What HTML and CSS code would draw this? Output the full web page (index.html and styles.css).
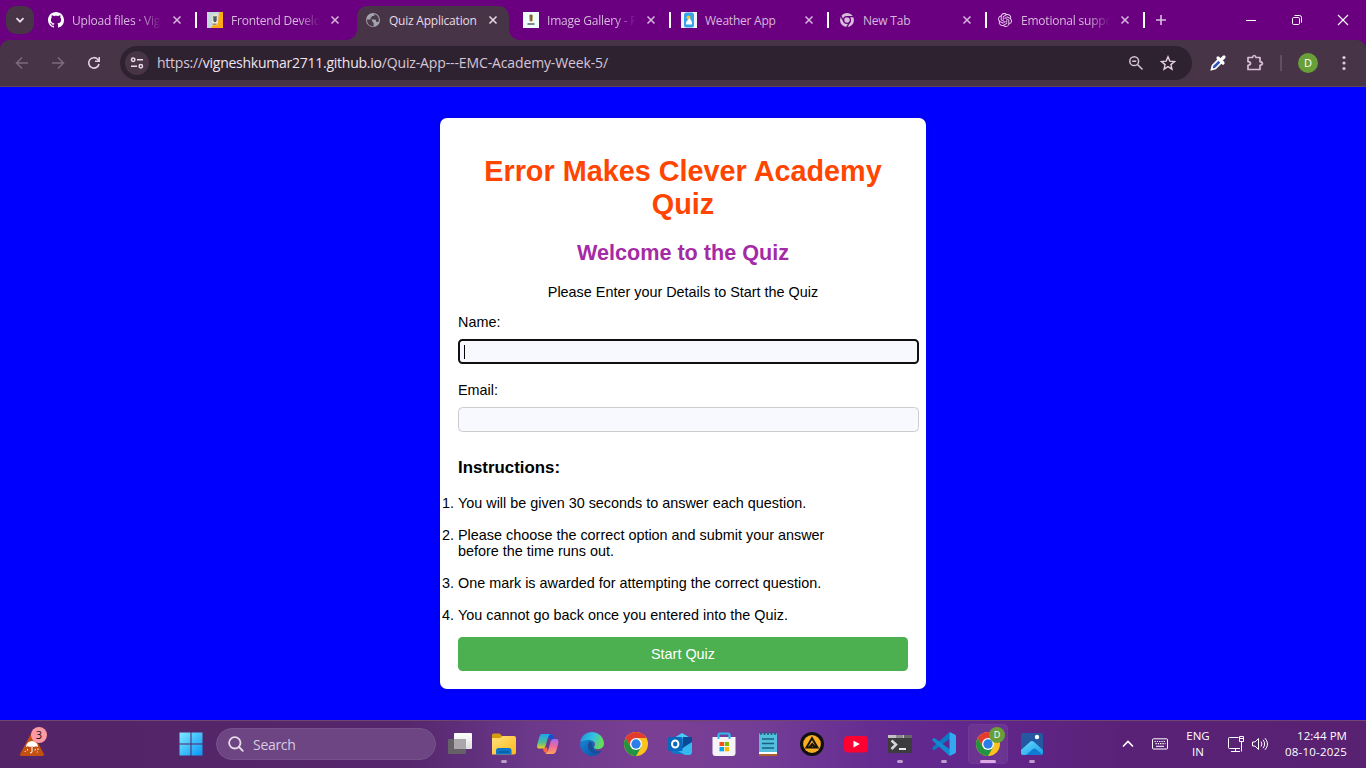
FILE: index.html
```html
<!DOCTYPE html>
<html lang="en">
<head>
<meta charset="utf-8">
<title>Quiz Application</title>
<link rel="stylesheet" href="styles.css">
</head>
<body>
<svg class="defs" width="0" height="0">
  <defs>
    <symbol id="x" viewBox="0 0 16 16"><path d="M4.500 4.500l7 7M11.500 4.500l-7 7" stroke="currentColor" stroke-width="1.5" fill="none"/></symbol>
    <symbol id="chrome" viewBox="0 0 24 24">
      <circle cx="12" cy="12" r="12" fill="#fcc31e"/>
      <path d="M1.61 6 6.8 15 12 6h10.39A12 12 0 0 0 1.61 6Z" fill="#e33b2e"/>
      <path d="M1.61 6A12 12 0 0 0 12 24l5.2-9H6.8Z" fill="#229342"/>
      <circle cx="12" cy="12" r="6" fill="#fff"/><circle cx="12" cy="12" r="4.7" fill="#2b7de9"/>
    </symbol>
  </defs>
</svg>
<div class="screen">
  <header class="tabstrip">
    <button class="tab-search"><svg width="12" height="12" viewBox="0 0 12 12"><path d="M2.5 4.2 6 7.7l3.5-3.5" stroke="#eadbe9" stroke-width="1.8" fill="none"/></svg></button>
    <nav class="tabs">
      <div class="tab sep first">
        <svg class="fav" viewBox="0 0 16 16"><path fill="#fff" d="M8 0C3.58 0 0 3.58 0 8c0 3.54 2.29 6.53 5.47 7.59.4.07.55-.17.55-.38 0-.19-.01-.82-.01-1.49-2.01.37-2.53-.49-2.69-.94-.09-.23-.48-.94-.82-1.13-.28-.15-.68-.52-.01-.53.63-.01 1.08.58 1.23.82.72 1.21 1.87.87 2.33.66.07-.52.28-.87.51-1.07-1.78-.2-3.64-.89-3.64-3.95 0-.87.31-1.59.82-2.15-.08-.2-.36-1.02.08-2.12 0 0 .67-.21 2.2.82.64-.18 1.32-.27 2-.27s1.36.09 2 .27c1.53-1.04 2.2-.82 2.2-.82.44 1.1.16 1.92.08 2.12.51.56.82 1.27.82 2.15 0 3.07-1.87 3.75-3.65 3.95.29.25.54.73.54 1.48 0 1.07-.01 1.93-.01 2.2 0 .21.15.46.55.38A8.01 8.01 0 0 0 16 8c0-4.42-3.58-8-8-8z"/></svg>
        <span class="title fade">Upload files · Vig</span><svg class="close"><use href="#x"/></svg>
      </div>
      <div class="tab">
        <svg class="fav" viewBox="0 0 16 16"><path fill="#c4d9dc" d="M0 0h16v16H0z"/><path fill="#ffa915" d="M12 0h4v16H4l2-4 5-1z"/><path fill="#e8e2cf" d="M5.500 2.500 11 2l-.5 11-5.500.5z"/><path d="M6 4h4v5H6z" fill="#8b8679"/><path d="M7 5h2v5H7z" fill="#3e5c72"/><path d="M5.500 11.500h4v1.500h-4z" fill="#a09178"/></svg>
        <span class="title fade">Frontend Develo</span><svg class="close"><use href="#x"/></svg>
      </div>
      <div class="tab active">
        <svg class="fav" viewBox="0 0 16 16"><circle cx="8" cy="8" r="7" fill="#a3a3ab"/><path d="M2 7.500h3.500q1.800 0 1.800 1.700v.8q1.400 0 1.400 1.500v2.800q-4.500.2-6-3.300-.8-1.600-.7-3.500zM9.500 2q.3 1.500-.8 2H7q-.2 1.800-1.500 1.800v1.700h4.500q1.200 0 1.200 1.500v1h1.300q1 0 1.300-1Q14.500 4 9.500 2z" fill="#4a3a4a"/></svg>
        <span class="title">Quiz Application</span><svg class="close"><use href="#x"/></svg>
      </div>
      <div class="tab sep">
        <svg class="fav" viewBox="0 0 16 16"><path fill="#effcfb" d="M0 0h16v16H0z"/><path fill="#b89a62" d="M6 3.500Q8 .8 10 3.500L9.600 9.500H6.700z"/><path d="M7.300 3h1.500v6H7.500z" fill="#655037"/><path d="M4.500 12h7" stroke="#5b655e" stroke-width="1.500"/></svg>
        <span class="title fade">Image Gallery - P</span><svg class="close"><use href="#x"/></svg>
      </div>
      <div class="tab sep">
        <svg class="fav" viewBox="0 0 16 16"><path fill="#f3f4f5" d="M0 0h16v16H0z"/><rect x="3" y=".5" width="10" height="15" rx="2.500" fill="#36a3ed"/><circle cx="7.500" cy="5.500" r="2" fill="#f6c52a"/><path d="M5 12.500q-.5-3 2-4.500l1.500-2 1.300 2q2 2 1 4.500z" fill="#fff"/></svg>
        <span class="title">Weather App</span><svg class="close"><use href="#x"/></svg>
      </div>
      <div class="tab sep">
        <svg class="fav" viewBox="0 0 16 16"><circle cx="8" cy="8" r="7" fill="#d7bed9"/><g fill="none" stroke="#6a0080" stroke-width="1.300"><circle cx="8" cy="8" r="3.400"/><path d="M8 4.600h7M5.060 9.700 1.560 3.640M10.940 9.700 7.440 15.760"/></g></svg>
        <span class="title">New Tab</span><svg class="close"><use href="#x"/></svg>
      </div>
      <div class="tab sep">
        <svg class="fav gpt" viewBox="0 0 24 24"><path fill="#ead7ee" d="M22.2819 9.8211a5.9847 5.9847 0 0 0-.5157-4.9108 6.0462 6.0462 0 0 0-6.5098-2.9A6.0651 6.0651 0 0 0 4.9807 4.1818a5.9847 5.9847 0 0 0-3.9977 2.9 6.0462 6.0462 0 0 0 .7427 7.0966 5.98 5.98 0 0 0 .511 4.9107 6.051 6.051 0 0 0 6.5146 2.9001A5.9847 5.9847 0 0 0 13.2599 24a6.0557 6.0557 0 0 0 5.7718-4.2058 5.9894 5.9894 0 0 0 3.9977-2.9001 6.0557 6.0557 0 0 0-.7475-7.0729zm-9.022 12.6081a4.4755 4.4755 0 0 1-2.8764-1.0408l.1419-.0804 4.7783-2.7582a.7948.7948 0 0 0 .3927-.6813v-6.7369l2.02 1.1686a.071.071 0 0 1 .038.052v5.5826a4.504 4.504 0 0 1-4.4945 4.4944zm-9.6607-4.1254a4.4708 4.4708 0 0 1-.5346-3.0137l.142.0852 4.783 2.7582a.7712.7712 0 0 0 .7806 0l5.8428-3.3685v2.3324a.0804.0804 0 0 1-.0332.0615L9.74 19.9502a4.4992 4.4992 0 0 1-6.1408-1.6464zM2.3408 7.8956a4.485 4.485 0 0 1 2.3655-1.9728V11.6a.7664.7664 0 0 0 .3879.6765l5.8144 3.3543-2.0201 1.1685a.0757.0757 0 0 1-.071 0l-4.8303-2.7865A4.504 4.504 0 0 1 2.3408 7.872zm16.5963 3.8558L13.1038 8.364 15.1192 7.2a.0757.0757 0 0 1 .071 0l4.8303 2.7913a4.4944 4.4944 0 0 1-.6765 8.1042v-5.6772a.79.79 0 0 0-.407-.667zm2.0107-3.0231l-.142-.0852-4.7735-2.7818a.7759.7759 0 0 0-.7854 0L9.409 9.2297V6.8974a.0662.0662 0 0 1 .0284-.0615l4.8303-2.7866a4.4992 4.4992 0 0 1 6.6802 4.66zM8.3065 12.863l-2.02-1.1638a.0804.0804 0 0 1-.038-.0567V6.0742a4.4992 4.4992 0 0 1 7.3757-3.4537l-.142.0805L8.704 5.459a.7948.7948 0 0 0-.3927.6813zm1.0976-2.3654l2.602-1.4998 2.6069 1.4998v2.9994l-2.5974 1.4997-2.6067-1.4997Z"/></svg>
        <span class="title fade">Emotional suppo</span><svg class="close"><use href="#x"/></svg>
      </div>
    </nav>
    <svg class="new-tab" width="12" height="12" viewBox="0 0 12 12"><path d="M6 1v10M1 6h10" stroke="#d9bfdf" stroke-width="1.600"/></svg>
    <div class="window-controls">
      <svg width="12" height="12" viewBox="0 0 12 12"><path d="M1 6.500h10" stroke="#fff"/></svg>
      <svg width="12" height="12" viewBox="0 0 12 12"><g fill="none" stroke="#fff"><rect x="1.500" y="3.500" width="7" height="7" rx="1.200"/><path d="M3.500 1.500h5q2 0 2 2v5"/></g></svg>
      <svg width="12" height="12" viewBox="0 0 12 12"><path d="M1 1l10 10M11 1 1 11" stroke="#fff" stroke-width="1.100"/></svg>
    </div>
  </header>

  <div class="toolbar-wrap"><div class="toolbar">
    <div class="nav-buttons">
      <svg class="dim" width="16" height="16" viewBox="0 0 16 16"><path d="M14 8H2.800M8 2.500 2.500 8 8 13.500" fill="none" stroke="currentColor" stroke-width="1.500"/></svg>
      <svg class="dim" width="16" height="16" viewBox="0 0 16 16"><path d="M2 8h11.200M8 2.500 13.500 8 8 13.500" fill="none" stroke="currentColor" stroke-width="1.500"/></svg>
      <svg width="16" height="16" viewBox="0 0 16 16"><path d="M13 9A5.200 5.200 0 1 1 11.700 4.300L13 5.600M13.200 2v4.200H9" fill="none" stroke="#e4cfe3" stroke-width="1.600"/></svg>
    </div>
    <div class="omnibox">
      <span class="site-info"><svg width="14" height="14" viewBox="0 0 14 14"><g fill="none" stroke="#eadbe9" stroke-width="1.500"><circle cx="3.200" cy="3.800" r="1.700"/><path d="M7 3.800h6M1 10.200h6"/><circle cx="10.800" cy="10.200" r="1.700"/></g></svg></span>
      <span class="url"><span class="soft">https://</span>vigneshkumar2711.github.io<span class="soft path">/Quiz-App---EMC-Academy-Week-5/</span></span>
      <svg class="zoom" width="16" height="16" viewBox="0 0 16 16"><g fill="none" stroke="#d8c4d8" stroke-width="1.500"><circle cx="6.200" cy="6.200" r="4.400"/><path d="M9.500 9.500l5 5M4.200 6.200h4"/></g></svg>
      <svg width="16" height="16" viewBox="0 0 16 16"><path d="M8 1.800l1.800 4.300 4.700.4-3.600 3.100 1.100 4.600L8 11.700l-4 2.500 1.100-4.600-3.600-3.100 4.700-.4z" fill="none" stroke="#e4cfe3" stroke-width="1.400"/></svg>
    </div>
    <svg class="dropper" width="18" height="18" viewBox="0 0 18 18"><path d="M2.500 15.500l1-4 6.700-6.700 3 3L6.500 14.500z" fill="#2f52bd" stroke="#fff" stroke-width="1.700"/><path d="M9 4 14 9M12 6l3-3" stroke="#fff" stroke-width="3.200" stroke-linecap="round"/></svg>
    <svg class="puzzle" width="18" height="18" viewBox="0 0 18 18"><path d="M2 3.500h4.500Q7 1.500 8.200 1.500T10 3.500h4v4.200q2.400.4 2.400 1.800T14 11.300v4.200H2v-4.200q2.500-.3 2.500-1.800T2 7.700z" fill="none" stroke="#d9bed9" stroke-width="1.700" stroke-linejoin="round"/></svg>
    <i class="divider"></i>
    <span class="avatar">D</span>
    <svg class="dots" width="4" height="16" viewBox="0 0 4 16" fill="#e0c7e0"><circle cx="2" cy="2.500" r="1.600"/><circle cx="2" cy="8" r="1.600"/><circle cx="2" cy="13.500" r="1.600"/></svg>
  </div></div>

  <main class="page">
    <section class="card">
      <h1>Error Makes Clever Academy Quiz</h1>
      <h2>Welcome to the Quiz</h2>
      <p class="lead">Please Enter your Details to Start the Quiz</p>
      <label>Name:</label>
      <div class="field focused"><i class="caret"></i></div>
      <label>Email:</label>
      <div class="field"></div>
      <h3>Instructions:</h3>
      <ol>
        <li>You will be given 30 seconds to answer each question.</li>
        <li>Please choose the correct option and submit your answer before the time runs out.</li>
        <li>One mark is awarded for attempting the correct question.</li>
        <li>You cannot go back once you entered into the Quiz.</li>
      </ol>
      <button class="start">Start Quiz</button>
    </section>
  </main>

  <footer class="taskbar">
    <div class="widget">
      <svg width="26" height="24" viewBox="0 0 26 24"><path d="M13 3 23.500 22.500H2.500z" fill="#c4500f" stroke="#c4500f" stroke-width="3" stroke-linejoin="round"/><path d="M7 15a6 6 0 0 1 12 0l-2-.8-2 .8-2-.8-2 .8-2-.8z" fill="#fff"/><path d="M13 14v6q-.3 1.400-2 .8M8.500 17v1.500M16.500 17l-.5 1.500M19 16.500v1.500M6 20l.5-1M18 20.500l.5-1" stroke="#fff" fill="none"/></svg>
      <span class="count">3</span>
    </div>
    <div class="start-icon"><svg width="24" height="24" viewBox="0 0 24 24"><defs><linearGradient id="win" x2="1" y2="1"><stop stop-color="#7eeaff"/><stop offset="1" stop-color="#0795f5"/></linearGradient></defs><path d="M.5 .5H11.500v11H.5zM12.500 .5h11v11h-11zM.5 12.500h11v11H.5zM12.500 12.500h11v11h-11z" fill="url(#win)"/></svg></div>
    <div class="search"><svg width="18" height="18" viewBox="0 0 18 18"><g fill="none" stroke="#e6dcea" stroke-width="1.800"><circle cx="7.800" cy="7.800" r="5.700"/><path d="M12 12l3.800 3.800" stroke-linecap="round"/></g></svg><span>Search</span></div>
    <div class="apps">
      <div class="app"><svg viewBox="0 0 24 24"><defs><linearGradient id="tv" x2="0" y2="1"><stop stop-color="#fff"/><stop offset="1" stop-color="#dedede"/></linearGradient></defs><rect y="7" width="18" height="15" rx="1" fill="#666067"/><rect x="6" y="1" width="18" height="16" rx="1" fill="url(#tv)"/><path d="M6 7h12v10H6z" fill="#aaa6ab"/></svg></div>
      <div class="app run"><svg viewBox="0 0 24 24"><defs><linearGradient id="fold" x2="1" y2="1"><stop stop-color="#ffe17c"/><stop offset="1" stop-color="#ffb91a"/></linearGradient></defs><path d="M0 3q0-1.500 1.500-1.500h6.200L10 4v5H0z" fill="#d79b08"/><path d="M0 6h8l2.500-2H22q2 0 2 2v14.500q0 2-2 2H0z" fill="url(#fold)"/><path d="M4 22.500v-4q0-2.500 2.500-2.500h10.500q2.500 0 2.500 2.500v4z" fill="#0c76c9"/><path d="M7 20h10" stroke="#075aa0" stroke-width="1.500"/></svg></div>
      <div class="app"><svg viewBox="0 0 24 24"><defs><linearGradient id="ca" x2="0" y2="1"><stop stop-color="#19a6ee"/><stop offset=".6" stop-color="#53bd91"/><stop offset="1" stop-color="#efd019"/></linearGradient><linearGradient id="cb" x2="0" y2="1"><stop stop-color="#a569ee"/><stop offset=".5" stop-color="#ef6a9b"/><stop offset="1" stop-color="#ffa45c"/></linearGradient></defs><path d="M8 2h7q2 0 3 3l1 3h-4z" fill="#1751cf"/><path d="M12 21H10q-2 0-2.800-3l-.5-2.500H11z" fill="#f56648"/><path d="M6 2h8.500Q12.500 3 11.500 7L9.500 14q-.8 2.500-3 2.500H3Q.5 16.500 1.200 13L3 6Q4 2 6 2z" fill="url(#ca)"/><path d="M17.500 7H20q3 0 2.300 4l-1.800 7q-1 4-4 4H9q2.500-1 3.500-5l2-7q.8-3 3-3z" fill="url(#cb)"/></svg></div>
      <div class="app"><svg viewBox="0 0 24 24"><defs><linearGradient id="ea" x2="1" y2=".3"><stop stop-color="#1a93dc"/><stop offset=".6" stop-color="#34c1e0"/><stop offset="1" stop-color="#65dc5b"/></linearGradient><linearGradient id="eb" x2="1" y2="1"><stop stop-color="#1687d4"/><stop offset="1" stop-color="#0c4ea5"/></linearGradient></defs><path d="M0 12a12 12 0 0 0 22 6.500q-3 1.500-6.500 0L12 8Q5 5 0 12z" fill="url(#eb)"/><path d="M.1 10.500A12 12 0 0 1 24 11.500c0 3.700-2.800 5.500-6 5.500-3.300 0-4.500-1-4-2 2.700-4-1-7-5-7-5 0-8.300 2-8.900 2.500z" fill="url(#ea)"/><path d="M9.500 9.500C6.500 12 7.500 19 13 21c4 1.300 7.500-.5 9-2.500-5 2-9.500 0-9.500-4.500 0-3-1-4.500-3-4.500z" fill="#174f97"/></svg></div>
      <div class="app"><svg><use href="#chrome"/></svg></div>
      <div class="app"><svg viewBox="0 0 24 24"><path d="M4 7 14 1l10 6v13q0 2-2 2H7q-3 0-3-3z" fill="#1276c8"/><path d="M6 6 14 1l10 6-12 8z" fill="#50c8f4"/><path d="M15 5h9v6l-10 6z" fill="#0b4a99"/><path d="m24 10-14 9 7 4h4q3 0 3-3z" fill="#35b8ed"/><rect y="5" width="14.500" height="14" rx="1.500" fill="#0868bd"/><ellipse cx="7.200" cy="12" rx="3.200" ry="3.500" fill="none" stroke="#fff" stroke-width="2"/></svg></div>
      <div class="app"><svg viewBox="0 0 24 24"><path d="M6.500 7V2.800q0-1.300 1.300-1.300h8.400q1.300 0 1.300 1.300V7" fill="none" stroke="#31b8ed" stroke-width="2"/><path d="M.5 5h23v16q0 3-3 3h-17q-3 0-3-3z" fill="#f5f3f7"/><path d="M6.500 2.500V7M17.500 2.500V7" stroke="#31b8ed" stroke-width="2"/><path d="M7.500 10H12v4H7.500z" fill="#f25022"/><path d="M12.700 10h4.300v4h-4.300z" fill="#7fba00"/><path d="M7.500 15H12v4.300H7.500z" fill="#00a4ef"/><path d="M12.700 15h4.300v4.300h-4.300z" fill="#ffb900"/></svg></div>
      <div class="app"><svg viewBox="0 0 24 24"><path d="M3 21h18v3H3z" fill="#a9622b"/><path d="M3 20h18v2H3z" fill="#fff"/><path d="M3 1.500h18V20H3z" fill="#55bddd"/><path d="M5 0v3m3.500-3v3M12 0v3m3.500-3v3M19 0v3" stroke="#18657e" stroke-width="1.500"/><path d="M6 7h12M6 11.500h12M6 16h12" stroke="#15637d" stroke-width="1.500"/></svg></div>
      <div class="app"><svg viewBox="0 0 24 24"><circle cx="12" cy="12" r="12" fill="#101010"/><circle cx="12" cy="12" r="8.900" fill="#f9ad20"/><path d="M12 6.200 6.500 15.500H17.500zM9.300 15.500l3-3.500 3 3.500" stroke="#17130c" stroke-width="2" fill="none"/></svg></div>
      <div class="app"><svg viewBox="0 0 24 24"><rect y="4" width="24" height="16.500" rx="4" fill="#ff0033"/><path d="m9.500 8.800 6.300 3.300-6.300 3.300z" fill="#fff"/></svg></div>
      <div class="app run"><svg viewBox="0 0 24 24"><rect y="3" width="24" height="18" rx="1.200" fill="#3c3b3d"/><path d="M0 3h16v3H0z" fill="#c2c0c4"/><path d="M8 3h7v3H8z" fill="#8e8b90"/><path d="M16 3h8v3h-8z" fill="#69666a"/><path d="m3.500 8.500 4.500 4-4.500 4.500" fill="none" stroke="#d6d4d7" stroke-width="2.500"/><path d="M11 17h7" stroke="#fff" stroke-width="1.800"/></svg></div>
      <div class="app run"><svg viewBox="0 0 24 24"><path d="M17.500 0 .4 15.500q-.6.600 0 1.200l1.200 1.100q.6.500 1.300 0L18 6.500z" fill="#0b79c6"/><path d="M17.500 24 .4 8.500q-.6-.6 0-1.200l1.200-1.100q.6-.5 1.300 0L18 17.500z" fill="#1389d4"/><path d="m17.500 0 5.300 2.500q1.200.5 1.200 1.700v15.600q0 1.200-1.200 1.700L17.500 24z" fill="#31a8f1"/></svg></div>
      <div class="app run current"><svg><use href="#chrome"/></svg><span class="profile">D</span></div>
      <div class="app run"><svg viewBox="0 0 24 24"><defs><linearGradient id="ph" x2="1" y2="1"><stop stop-color="#69dcff"/><stop offset="1" stop-color="#159ce8"/></linearGradient></defs><rect x="1" y="1" width="22" height="22" rx="2" fill="#2459a1"/><path d="M1 18 10.500 9.500q1.500-1 3 0L23 18v3q0 2-2 2H3q-2 0-2-2z" fill="url(#ph)"/><path d="m6 23 7-6q1.500-1 3 0l6 5.500-1 .5z" fill="#107bd3"/><circle cx="17" cy="5" r="2.200" fill="#fff"/></svg></div>
    </div>
    <div class="tray">
      <svg class="chev" width="14" height="14" viewBox="0 0 14 14"><path d="m2 9.500 5-5 5 5" fill="none" stroke="#fff" stroke-width="1.600"/></svg>
      <svg class="keys" width="16" height="12" viewBox="0 0 16 12"><rect x=".5" y=".8" width="15" height="10.200" rx="1" fill="none" stroke="#fff"/><path d="M2.500 3.500h11M3.500 5.700h10" stroke="#fff" stroke-width="1.200" stroke-dasharray="1.300 1"/><path d="M4 8.300h8" stroke="#fff"/></svg>
      <div class="lang"><span>ENG</span><span>IN</span></div>
      <svg class="net" width="18" height="18" viewBox="0 0 18 18"><path d="M11.500 2.500H2.500q-1 0-1 1v9q0 1 1 1H13M4 16.500h9M8.500 13.500v3M12.500 1.500h4v5h-4zM14.500 6.500v10M12.500 3.500h4" fill="none" stroke="#fff"/></svg>
      <svg class="vol" width="18" height="16" viewBox="0 0 18 16"><path d="M1.500 6H4l3.500-3.500v11L4 10H1.500zM10 5.500q2 2.500 0 5M12 3.800q3.300 4.200 0 8.400M14 2.200q5 5.800 0 11.600" fill="none" stroke="#fff" stroke-linejoin="round"/></svg>
      <div class="clock"><span class="time">12:44 PM</span><span class="date">08-10-2025</span></div>
    </div>
  </footer>
</div>
</body>
</html>
```
FILE: styles.css
```css
* { box-sizing: border-box; }
body { margin: 0; font-family: "Open Sans", "Noto Sans", sans-serif; }
svg { display: block; flex: none; }
.defs { position: absolute; }
.screen { width: 1366px; height: 768px; display: flex; flex-direction: column; overflow: hidden; background: #00f; }

/* Tab strip */
.tabstrip { flex: none; height: 40px; background: #6a0080; display: flex; align-items: center; padding-left: 6px; }
.tab-search { width: 28px; height: 28px; border: 0; border-radius: 10px; background: #473446; padding: 0; display: grid; place-items: center; margin-right: 5px; }
.tabs { display: flex; height: 40px; }
.tab { position: relative; width: 158px; height: 40px; padding: 0 12px 0 10px; display: flex; align-items: center; color: #d5b8da; }
.tab.first { padding-left: 9px; }
.tab.sep { background: linear-gradient(#fff, #fff) no-repeat 156px 12px / 2px 16px; }
.fav { width: 16px; height: 16px; margin-right: 8px; }
.fav.gpt { padding: 1px; }
.title { width: 89px; flex: none; height: 20px; line-height: 20px; padding-top: 1px; font-size: 12px; letter-spacing: -.22px; white-space: nowrap; }
.title.fade { -webkit-mask-image: linear-gradient(90deg, #000 68px, transparent 89px); mask-image: linear-gradient(90deg, #000 68px, transparent 89px); }
.close { width: 16px; height: 16px; margin-left: 7px; }
.tab.first .close { margin-left: 8px; }
.tab.active { color: #eadbe9; margin: 6px 4px 0 2px; width: 152px; height: 34px; padding: 0 12px 6px 8px; background: #473446; border-radius: 10px 10px 0 0; }
.tab.active::before, .tab.active::after { content: ""; position: absolute; bottom: 0; width: 10px; height: 10px; }
.tab.active::before { left: -10px; background: radial-gradient(circle at 0 0, transparent 9.5px, #473446 10px); }
.tab.active::after { right: -10px; background: radial-gradient(circle at 100% 0, transparent 9.5px, #473446 10px); }
.new-tab { margin-left: 10px; }
.window-controls { margin-left: auto; display: flex; gap: 34px; padding-right: 17px; }

/* Toolbar */
.toolbar-wrap { flex: none; height: 47px; background: #6a0080; }
.toolbar { height: 47px; background: #473446; border-radius: 9px 9px 0 0; border-bottom: 1px solid #58465a; padding-left: 14px; display: flex; align-items: center; }
.nav-buttons { display: flex; gap: 20px; margin-right: 18px; }
.dim { color: #7d6a7e; }
.omnibox { width: 1072px; height: 34px; border-radius: 17px; background: #2f2230; display: flex; align-items: center; padding: 0 16px 0 5px; }
.site-info { width: 24px; height: 24px; border-radius: 50%; background: #473446; display: grid; place-items: center; margin-right: 8px; }
.url { flex: 1; font-size: 14px; line-height: 20px; letter-spacing: -.25px; color: #eee4ee; white-space: nowrap; }
.soft { color: #d6c6d7; }
.path { letter-spacing: -.13px; }
.zoom { margin-right: 16px; }
.dropper { margin-left: 17px; }
.puzzle { margin-left: 19px; }
.divider { width: 2px; height: 16px; background: #654e65; margin-left: 16px; }
.avatar { width: 20px; height: 20px; border-radius: 50%; background: #689f38; color: #fff; font-size: 11px; line-height: 20px; text-align: center; margin-left: 16px; }
.dots { margin-left: 24px; }

/* Quiz page */
.page { flex: 1; display: flex; justify-content: center; align-items: flex-start; padding-top: 31px; background: #00f; font: 14.4px/16px "Liberation Sans", Arial, sans-serif; color: #000; }
.card { width: 486px; height: 571px; border-radius: 7px; background: #fff; padding: 18px; box-shadow: 0 0 9px rgba(0, 0, 0, .1); }
h1 { margin: 19px 0; font-size: 28.8px; line-height: 33px; color: #ff4500; text-align: center; }
h2 { margin: 0 0 19px; font-size: 21.6px; line-height: 25px; color: #a52aa5; text-align: center; }
.lead { margin: 0 0 14px; text-align: center; }
label { display: block; margin-bottom: 9px; }
.field { width: 461px; height: 25px; border: 1px solid #ccc; border-radius: 4.5px; background: #f8f8ff; margin-bottom: 18px; padding: 5px; }
.field.focused { border: 2px solid #101010; padding: 4px; }
.caret { display: block; width: 1px; height: 14px; background: #000; }
h3 { margin: 26px 0 18px; font-size: 16.85px; line-height: 19px; }
ol { margin: 0; padding: 0; width: 405px; display: grid; row-gap: 16px; }
.start { display: block; width: 450px; height: 34px; margin-top: 14px; border: 0; border-radius: 4.5px; background: #4caf50; color: #fff; font: 14.4px "Liberation Sans", Arial, sans-serif; }

/* Taskbar */
.taskbar { flex: none; height: 48px; padding-bottom: 1px; border-top: 1px solid #70466f; display: flex; align-items: center; background: linear-gradient(90deg, #532467 0, #54266b 400px, #6b388a 530px, #793f94 650px, #743d95 760px, #632a90 890px, #61258a 1000px, #5a2277 1120px, #582171 1366px); color: #fff; }
.widget { position: relative; width: 26px; margin: 0 134px 0 19px; }
.count { position: absolute; left: 12px; top: -5px; width: 16px; height: 16px; border-radius: 50%; background: #ff99a4; color: #111; font-size: 11px; line-height: 16px; text-align: center; }
.start-icon { margin-right: 13px; }
.search { width: 220px; height: 32px; border: 1px solid #76528a; border-radius: 16px; background: #6c4582; display: flex; align-items: center; gap: 8px; padding-left: 10px; font-size: 14px; letter-spacing: -.3px; color: #d9cbe0; }
.apps { display: flex; margin-left: 2px; }
.app { position: relative; width: 44px; height: 40px; display: grid; place-items: center; border-radius: 4px; }
.app svg { width: 24px; height: 24px; }
.app.run::after { content: ""; position: absolute; left: 19px; bottom: 1px; width: 6px; height: 3px; border-radius: 2px; background: #bd9dca; }
.app.current { width: 40px; margin: 0 2px; border: 1px solid #71389a; background: #6b3491; }
.app.current::after { left: 11px; bottom: 0; width: 16px; background: #dea7e6; }
.profile { position: absolute; right: 2px; top: 2px; width: 16px; height: 16px; border-radius: 50%; background: #689f38; font-size: 9px; line-height: 16px; text-align: center; }
.tray { margin-left: auto; display: flex; align-items: center; padding-right: 19px; font-size: 11.5px; line-height: 16px; }
.keys { margin-left: 17px; }
.lang { display: flex; flex-direction: column; align-items: center; width: 30px; margin-left: 15px; }
.net { margin-left: 14px; }
.vol { margin-left: 6px; }
.clock { display: flex; flex-direction: column; align-items: flex-end; width: 66px; margin-left: 12px; white-space: nowrap; }
.time { letter-spacing: .05px; }
.date { letter-spacing: .2px; }
```
